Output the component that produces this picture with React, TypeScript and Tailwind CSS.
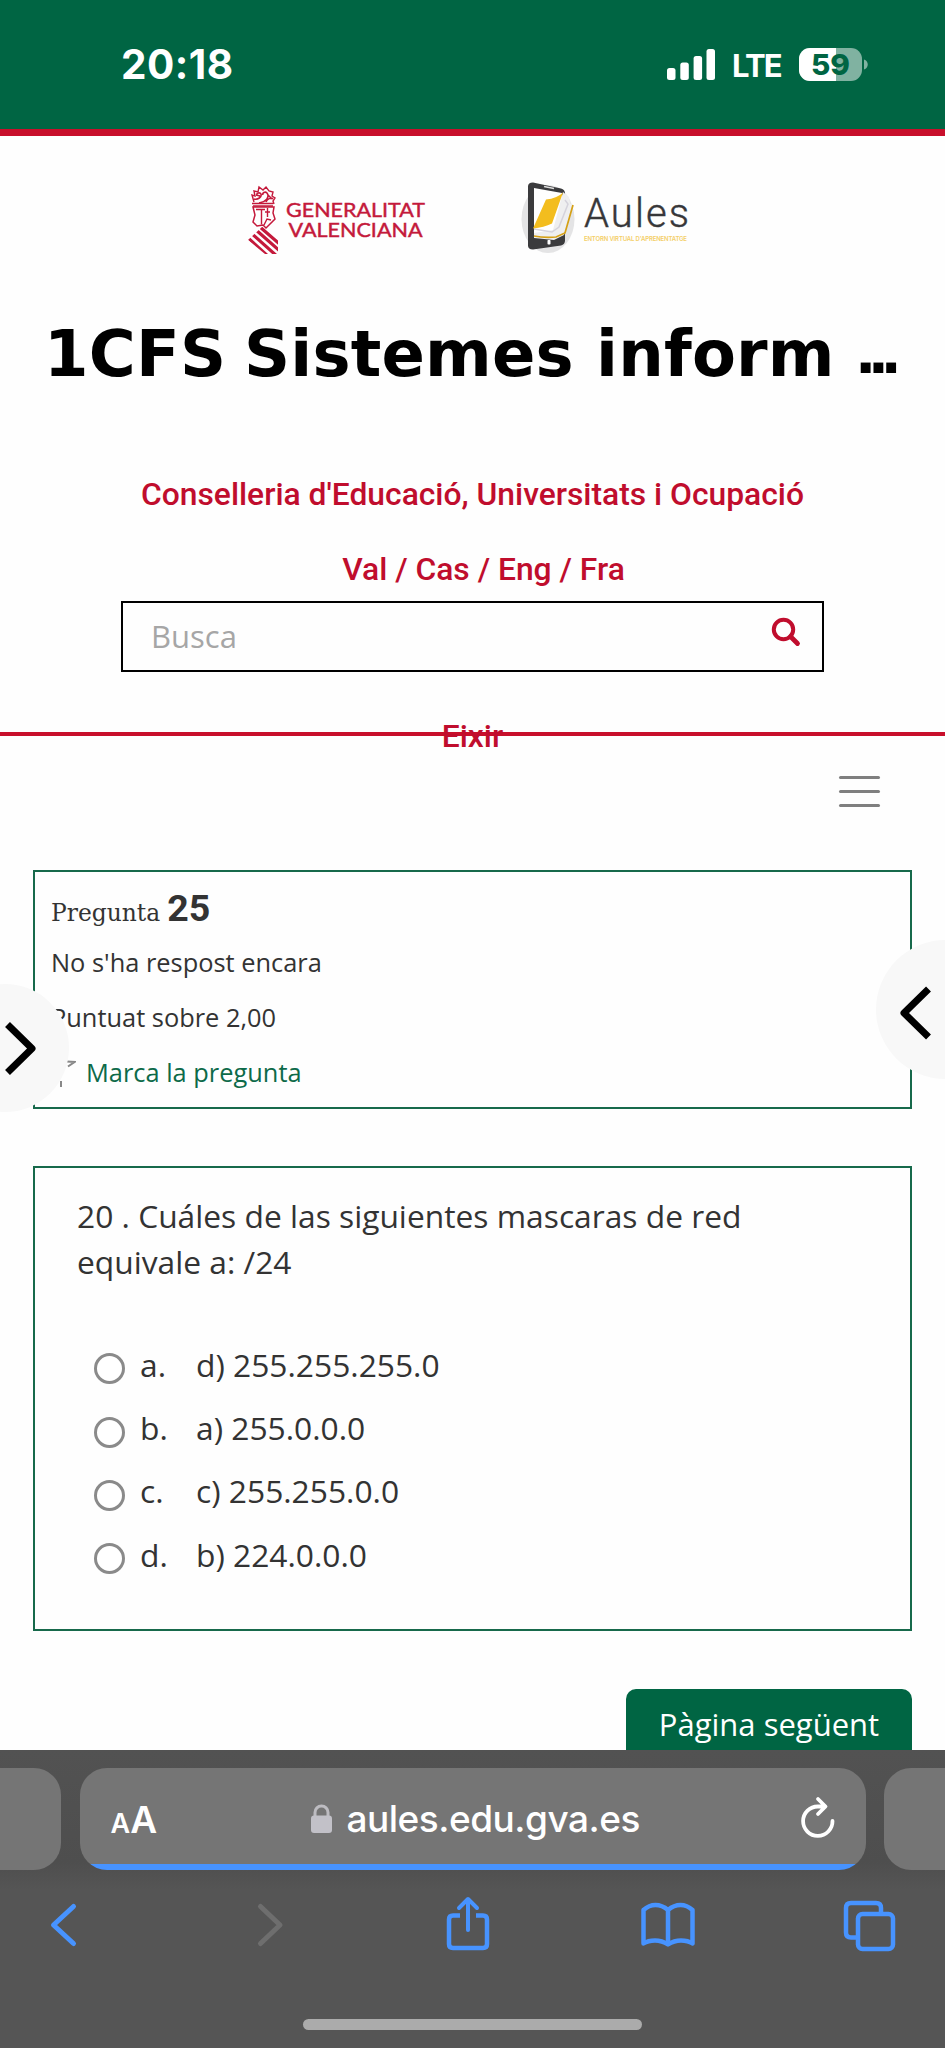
import React from "react";

const answers = [
  { letter: "a.", text: "d) 255.255.255.0" },
  { letter: "b.", text: "a) 255.0.0.0" },
  { letter: "c.", text: "c) 255.255.0.0" },
  { letter: "d.", text: "b) 224.0.0.0" },
];

function StatusBar() {
  return (
    <div className="flex h-[136px] items-start justify-between border-b-[7px] border-[#c80f2b] bg-[#006543] pr-[76px] pl-[121px] font-['Inter',sans-serif] text-white">
      <span className="mt-[40px] text-[40.5px] leading-[49px] font-bold tracking-[0.5px]">20:18</span>
      <div className="mt-[47px] flex items-center">
        <svg className="mr-[16px] h-[33px] w-[49px]" viewBox="0 0 49 33" fill="#fff">
          <rect x="0" y="20" width="8.500" height="12" rx="2.5" />
          <rect x="13.3" y="14.5" width="8.500" height="17.5" rx="2.5" />
          <rect x="26.6" y="8" width="8.500" height="24" rx="2.5" />
          <rect x="39.5" y="1" width="8.500" height="31" rx="2.5" />
        </svg>
        <span className="mt-[2px] w-[67px] text-[31px] leading-[33px] font-bold tracking-[-1.8px] whitespace-nowrap">LTE</span>
        <svg className="h-[33px] w-[70px]" viewBox="0 0 70 33">
          <defs>
            <clipPath id="charge"><rect width="37" height="33" /></clipPath>
          </defs>
          <rect width="63" height="33" rx="11" fill="#80b2a1" />
          <rect width="63" height="33" rx="11" fill="#fff" clipPath="url(#charge)" />
          <path d="M65 11.500c5 1.500 5 8.500 0 10z" fill="#80b2a1" />
          <text x="31.500" y="27" textAnchor="middle" fontSize="29" fontWeight="800" fill="#006543" textLength="39" lengthAdjust="spacingAndGlyphs">59</text>
        </svg>
      </div>
    </div>
  );
}

function GeneralitatLogo() {
  return (
    <svg className="h-[80px] w-[180px]" viewBox="248 180 180 80" fill="none" stroke="#c4193b">
      <path d="M254 202l-2-7 3 1-1-5 4 1 1-5 4 3 3-3 3 4 4 1-1 4 3 2-2 3 1 3" strokeWidth="1.400" />
      <path d="M254 199c4 1 8-2 7-5-1-2-5-1-4 1M259 203c7-1 11-6 8-10-2-2-5 0-4 2M266 202c1-3 5-5 7-3M256 195l4 1M268 195l4 4" strokeWidth="1.600" />
      <path d="M252 203.500h21M253 206h20" strokeWidth="1.300" />
      <path d="M253 207l2 8-2 7 4 4 6-1 3 3 9-9-2-6 1-6z" strokeWidth="1.500" />
      <path d="M256 209.500h9M261.500 209.500v15M267.500 208v9M265 212h5M264 225l3-6 4 1" strokeWidth="1.400" />
      <clipPath id="shield"><path d="M248 240l15-14 15 11v17h-13z" /></clipPath>
      <g clipPath="url(#shield)" strokeWidth="3.200">
        <path d="M246 236l24 22M250.500 232.500l28 25M255.500 229.500l26 23M260 227l23 20" />
      </g>
      <g fill="#c4193b" stroke="#c4193b" strokeWidth="0.450" fontFamily="Lato, sans-serif" fontWeight="400" fontSize="20">
        <text x="286" y="217" textLength="139" lengthAdjust="spacingAndGlyphs">GENERALITAT</text>
        <text x="288.500" y="237" textLength="134" lengthAdjust="spacingAndGlyphs">VALENCIANA</text>
      </g>
    </svg>
  );
}

function AulesLogo() {
  return (
    <svg className="h-[80px] w-[172px]" viewBox="518 178 172 80">
      <ellipse cx="548" cy="219" rx="26.500" ry="34" fill="#e4e4e5" />
      <path d="M533 182.500l28 6q4 1 4 5v47q0 4-4 5l-28 4q-5 0-5-4v-59q0-4 5-4z" fill="#3b3b3d" />
      <path d="M534 188l28 5v42l-28 3z" fill="#fff" />
      <path d="M544 186.500l10 2" stroke="#ddd" strokeWidth="1.500" />
      <path d="M563 192l6 5 1 7 3 1-9 30-10 5-20-2v-5l19-3z" fill="#efeff0" />
      <path d="M565 200l3 4-9 23-7 5-18-3" fill="none" stroke="#d5d3dc" strokeWidth="1.500" />
      <path d="M563 192.500q-6 6-17 7l-13 29q11-1 19-5z" fill="#f3bd1e" />
      <path d="M573 205l-8 28-9 4q-12 1-22-1" fill="none" stroke="#d5a015" strokeWidth="1.700" />
      <rect x="547.500" y="240" width="3" height="4.500" rx="0.800" fill="#fff" />
      <text x="584" y="227" fontFamily="Roboto, sans-serif" fontWeight="300" fontSize="40" fill="#373739" stroke="#373739" strokeWidth="0.400" textLength="105" lengthAdjust="spacing">Aules</text>
      <text x="584" y="240.500" fontFamily="Inter, sans-serif" fontWeight="600" fontSize="6" fill="#f4cf68" textLength="103" lengthAdjust="spacing">ENTORN VIRTUAL D'APRENENTATGE</text>
    </svg>
  );
}

function Header() {
  return (
    <header className="relative h-[600px] border-b-[4px] border-[#c80f2b] font-['Roboto',sans-serif] text-[31.8px] leading-[40px] font-medium text-[#c00d2d]">
      <div className="flex h-[178px] items-start pt-[42px]">
        <div className="mt-[2px] ml-[248px]"><GeneralitatLogo /></div>
        <div className="ml-[90px]"><AulesLogo /></div>
      </div>
      <h1 className="flex h-[80px] items-center pl-[44px] font-['DejaVu_Sans',sans-serif] text-[64px] leading-[80px] font-bold whitespace-nowrap text-black">
        <span className="w-[200px] tracking-[0.3px]">1CFS</span>
        <span className="w-[352px] tracking-[0.2px]">Sistemes</span>
        <span className="w-[259px] tracking-[0.2px]">inform</span>
        <span className="text-[56px] tracking-[-8.5px]">...</span>
      </h1>
      <p className="mt-[80px] text-center">Conselleria d'Educació, Universitats i Ocupació</p>
      <p className="mt-[35px] pl-[22px] text-center">Val / Cas / Eng / Fra</p>
      <div className="mx-auto mt-[12px] flex h-[71px] w-[703px] items-start justify-between border-2 border-black pr-[21px] pl-[28px]">
        <span className="pt-[13px] font-['Open_Sans',sans-serif] text-[31px] leading-[40px] font-normal text-[#a6a6a6]">Busca</span>
        <svg className="mt-[14px] h-[30px] w-[30px]" viewBox="0 0 30 30" fill="none" stroke="#c00d2d">
          <circle cx="12.500" cy="12.500" r="9.700" strokeWidth="4" />
          <path d="M19.500 19.500l7 7" strokeWidth="4.800" strokeLinecap="round" />
        </svg>
      </div>
      <p className="absolute inset-x-0 top-[580px] text-center">Eixir</p>
    </header>
  );
}

function EdgeButtons() {
  return (
    <>
      <div className="absolute top-[984px] left-[-59px] h-[128px] w-[128px] rounded-full bg-[#f8f8f8]">
        <svg className="absolute top-[34px] left-[59px] h-[60px] w-[40px]" viewBox="0 0 40 60" fill="none" stroke="#000" strokeWidth="7" strokeLinejoin="round">
          <path d="M7.500 6.500l24.500 24-24.500 24" />
        </svg>
      </div>
      <div className="absolute top-[940px] left-[876px] h-[139px] w-[139px] rounded-full bg-[#f8f8f8]">
        <svg className="absolute top-[43px] left-[20px] h-[60px] w-[40px]" viewBox="0 0 40 60" fill="none" stroke="#000" strokeWidth="7" strokeLinejoin="round">
          <path d="M32.500 6l-24.500 24 24.500 24" />
        </svg>
      </div>
    </>
  );
}

function BrowserBar() {
  return (
    <div className="absolute inset-x-0 top-[1750px] h-[298px] bg-[#555555]">
      <div className="h-[140px] bg-linear-to-b from-[#525252] via-[#4e4e4e] via-80% to-[#555555] pt-[18px]">
        <div className="flex h-[102px] justify-between font-['Inter',sans-serif] text-white">
          <div className="w-[61px] rounded-r-[27px] bg-[#757575]" />
          <div className="flex w-[786px] items-start overflow-hidden rounded-[27px] bg-linear-to-t from-[#4793ff] from-[6px] to-[#757575] to-[6px]">
            <span className="mt-[27px] ml-[31px] flex w-[51px] items-baseline leading-[50px] font-semibold">
              <span className="text-[27px]">A</span>
              <span className="text-[37px]">A</span>
            </span>
            <svg className="mt-[35px] ml-[148px] h-[32px] w-[23px]" viewBox="0 0 23 32">
              <path d="M5 14V9.500a6.500 6.500 0 0 1 13 0V14" fill="none" stroke="#bdbcc1" strokeWidth="3" />
              <rect x="1" y="12.500" width="21" height="17.500" rx="3" fill="#c2c1c8" />
            </svg>
            <span className="mt-[26px] ml-[14px] w-[300px] text-[37px] leading-[50px] font-medium tracking-[-0.5px] whitespace-nowrap">aules.edu.gva.es</span>
            <svg className="mt-[28px] ml-[153px] h-[44px] w-[36px]" viewBox="0 0 36 44" fill="none" stroke="#fff" strokeWidth="3.800" strokeLinecap="round" strokeLinejoin="round">
              <path d="M32.500 25A14.700 14.700 0 1 1 18 10.500h7M18 3l7.500 7.500L18 18" />
            </svg>
          </div>
          <div className="w-[61px] rounded-l-[27px] bg-[#757575]" />
        </div>
      </div>
      <div className="flex h-[70px] items-center pl-[48px] text-[#4793ff]">
        <svg className="h-[60px] w-[30px]" viewBox="0 0 30 60" fill="none" stroke="currentColor" strokeWidth="5" strokeLinecap="round" strokeLinejoin="round">
          <path d="M25.500 11.500L5.500 30l20 18.500" />
        </svg>
        <svg className="ml-[178px] h-[60px] w-[30px]" viewBox="0 0 30 60" fill="none" stroke="#6e6e6e" strokeWidth="5" strokeLinecap="round" strokeLinejoin="round">
          <path d="M4.500 11.500L24 30 4.500 48.500" />
        </svg>
        <svg className="ml-[159px] h-[60px] w-[46px]" viewBox="0 0 46 60" fill="none" stroke="currentColor" strokeWidth="4.500" strokeLinecap="round" strokeLinejoin="round">
          <path d="M15 20.500H8q-4 0-4 4V49q0 4 4 4h30q4 0 4-4V24.500q0-4-4-4h-7" strokeLinecap="butt" />
          <path d="M23 35V5M14 13l9-9 9 9" strokeWidth="4" />
        </svg>
        <svg className="ml-[149px] h-[60px] w-[56px]" viewBox="0 0 56 60" fill="none" stroke="currentColor" strokeWidth="4.500" strokeLinecap="round" strokeLinejoin="round">
          <path d="M28 49V15Q22 10 15.500 10T3.500 15v33.500Q8 45.500 15 45.500t13 4q6-4 13-4t11.500 3V15Q47 10 40.500 10T28 15" />
        </svg>
        <svg className="ml-[147px] h-[60px] w-[54px]" viewBox="0 0 54 60" fill="none" stroke="currentColor" strokeWidth="4.500" strokeLinejoin="round">
          <rect x="15" y="19" width="35" height="35" rx="4.500" />
          <path d="M15 42.500H8q-5 0-5-5V13q0-5 5-5h25q5 0 5 5v6" />
        </svg>
      </div>
      <div className="mx-auto mt-[59px] h-[11px] w-[339px] rounded-full bg-[#ababab]" />
    </div>
  );
}

export default function App() {
  return (
    <div className="relative h-[2048px] w-[945px] overflow-hidden bg-[#fefefe] font-['Open_Sans',sans-serif] text-[#333333]">
      <StatusBar />
      <Header />
      <div className="flex h-[134px] justify-end pt-[40px] pr-[65px]">
        <div className="flex h-[31px] w-[41px] flex-col justify-between">
          <span className="h-[3px] rounded-full bg-[#7f7f7f]" />
          <span className="h-[3px] rounded-full bg-[#7f7f7f]" />
          <span className="h-[3px] rounded-full bg-[#7f7f7f]" />
        </div>
      </div>

      <main className="px-[33px]">
        <section className="h-[239px] border-2 border-[#17694b] pl-[16px] text-[25.4px] leading-[40px] whitespace-nowrap">
          <h3 className="mt-[16px] flex h-[40px] items-baseline font-['DejaVu_Serif',serif] text-[23.4px]">
            Pregunta
            <span className="ml-[7px] font-['Roboto',sans-serif] text-[37.5px] font-bold">25</span>
          </h3>
          <p className="mt-[14px]">No s'ha respost encara</p>
          <p className="mt-[15px]">Puntuat sobre 2,00</p>
          <p className="mt-[15px] flex text-[#0d6a49]">
            <svg className="mr-[10px] h-[40px] w-[25px]" viewBox="0 0 25 40" fill="none" stroke="#888" strokeWidth="2">
              <path d="M15.500 9.500l8 .5-6.500 4.500M10 29v6" />
            </svg>
            Marca la pregunta
          </p>
        </section>

        <section className="mt-[57px] h-[465px] border-2 border-[#17694b] pl-[42px] text-[31.75px] leading-[46px]">
          <p className="mt-[25px] w-[720px]">20 . Cuáles de las siguientes mascaras de red equivale a: /24</p>
          <div className="mt-[48px] pl-[17px]">
            {answers.map((a) => (
              <div key={a.letter} className="flex h-[63.4px] items-center">
                <span className="mt-[8px] h-[31px] w-[31px] rounded-full border-[3px] border-[#8a8a8a] bg-white" />
                <span className="ml-[15px] w-[56px]">{a.letter}</span>
                <span>{a.text}</span>
              </div>
            ))}
          </div>
        </section>

        <div className="mt-[58px] flex justify-end">
          <button className="h-[80px] w-[286px] rounded-[10px] bg-[#006543] pb-[10px] text-[31px] leading-[40px] text-white">Pàgina següent</button>
        </div>
      </main>

      <EdgeButtons />
      <BrowserBar />
    </div>
  );
}
